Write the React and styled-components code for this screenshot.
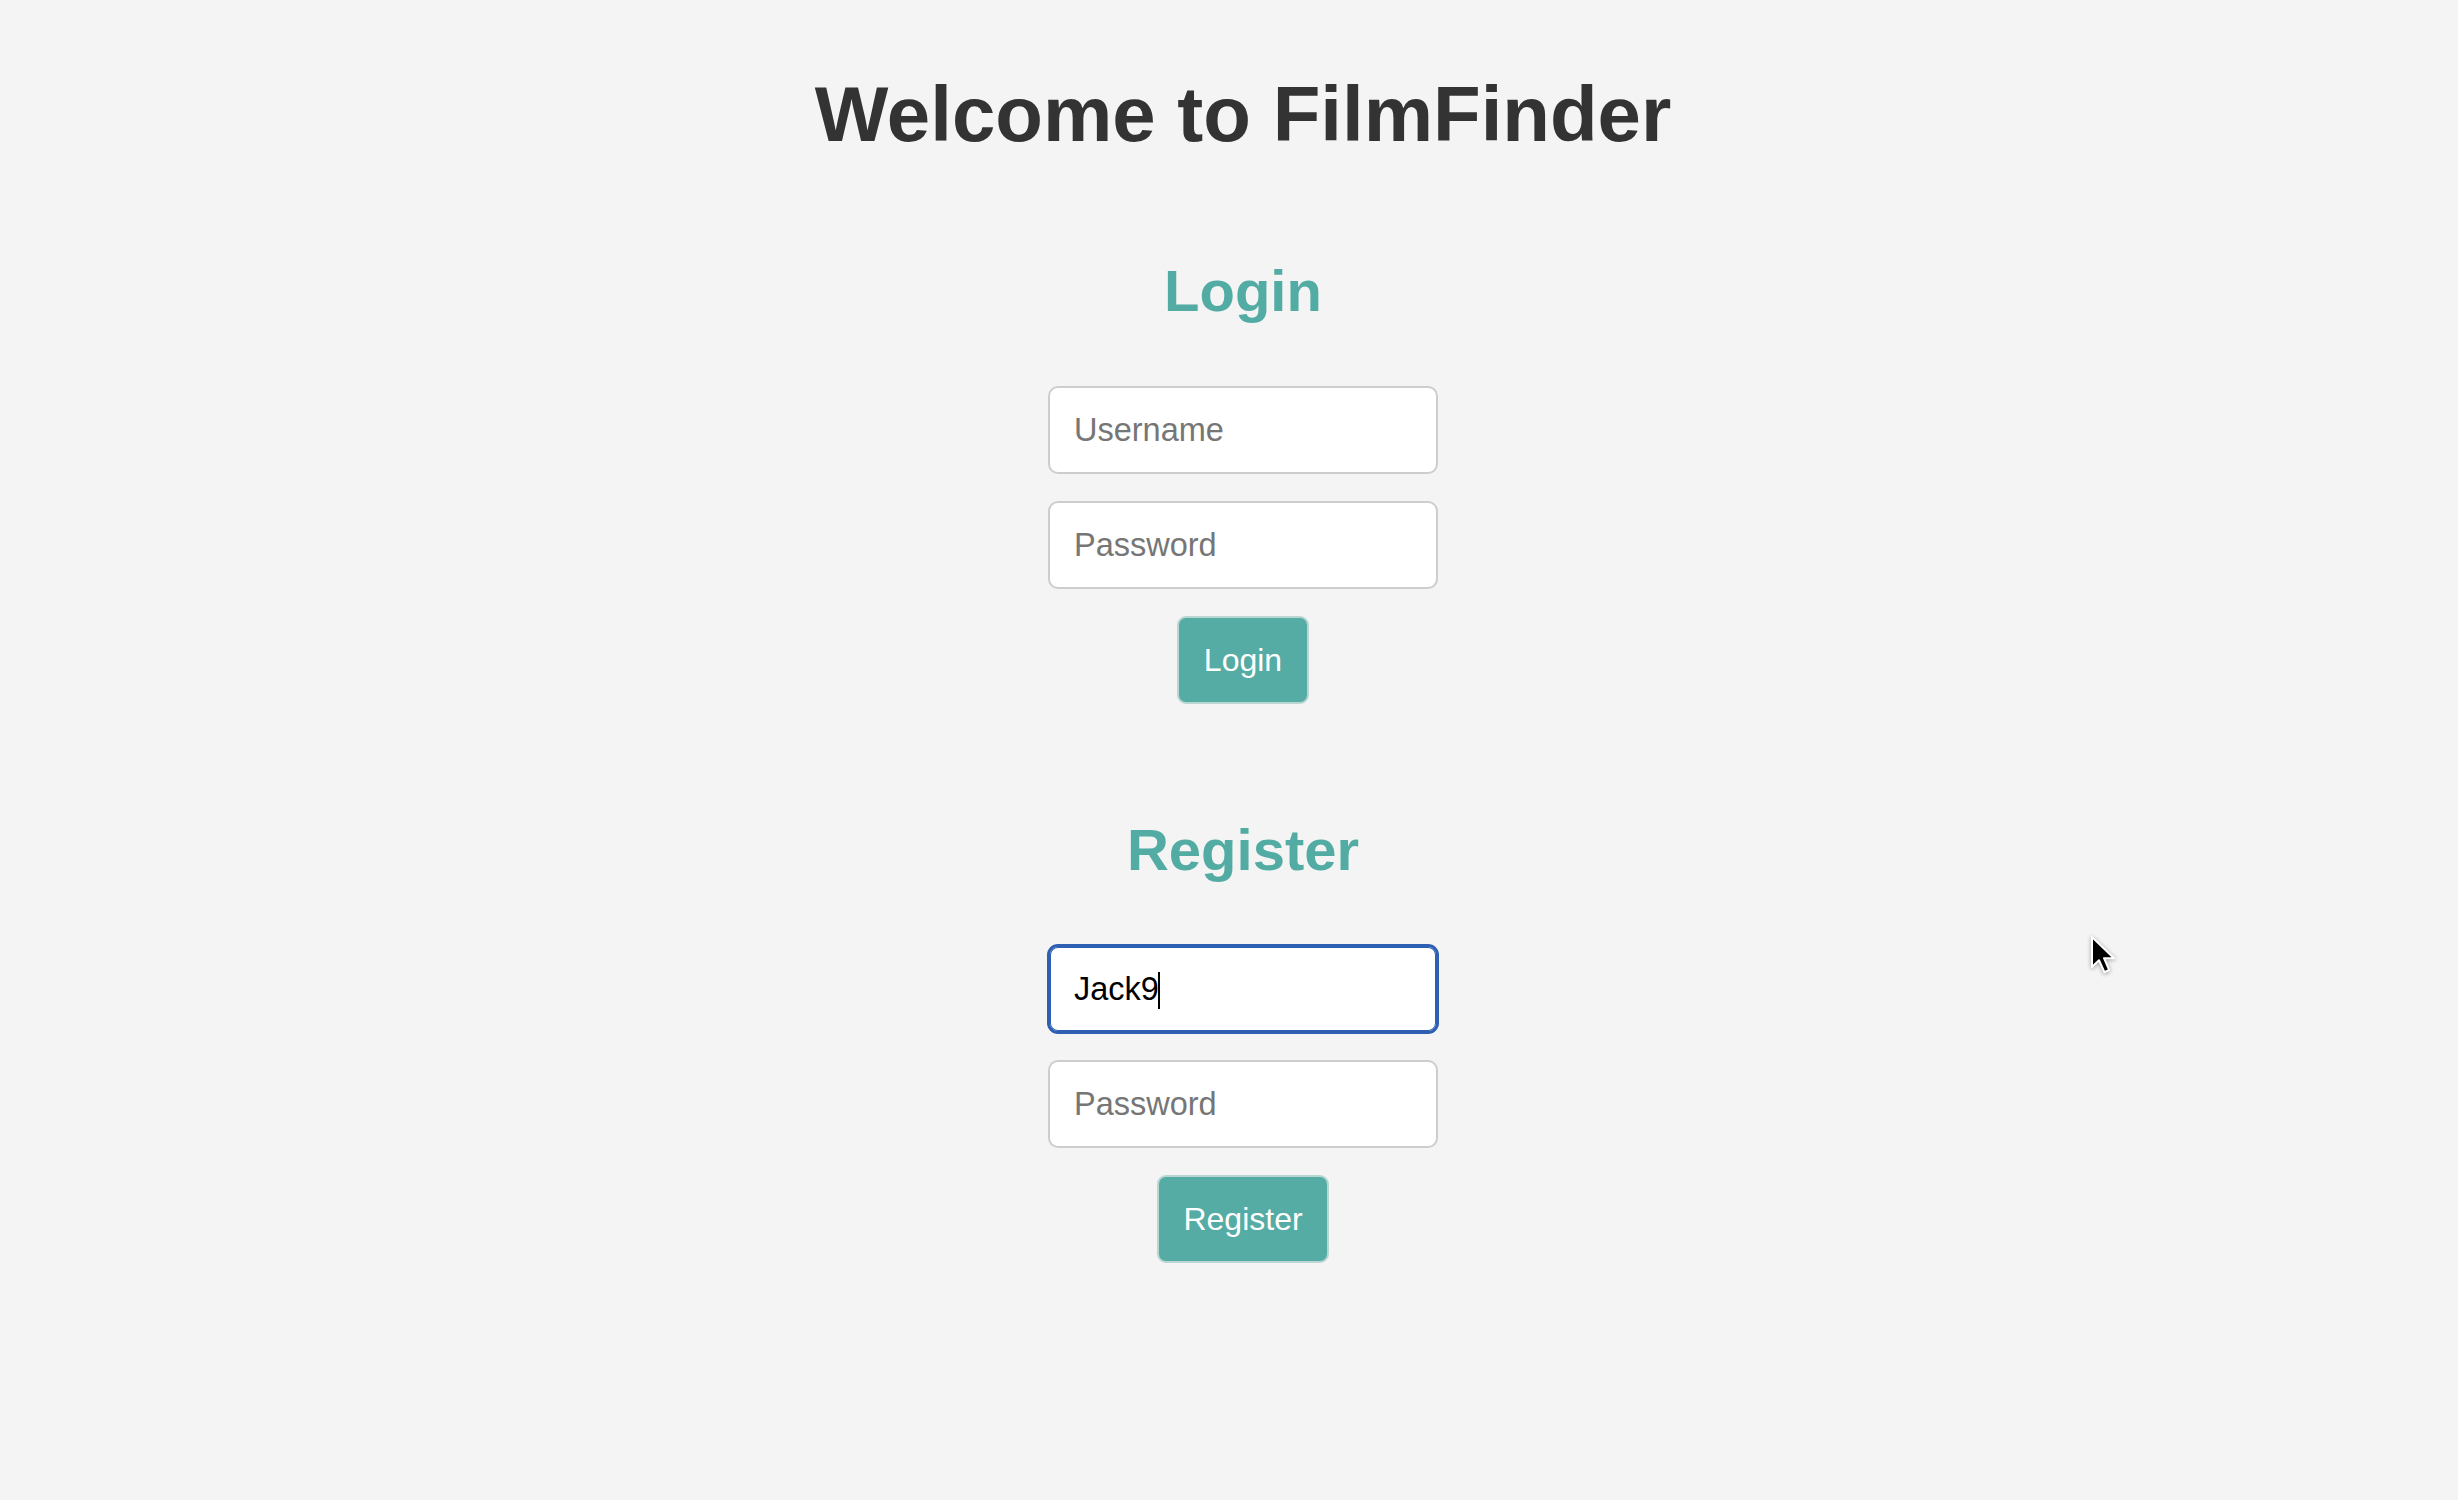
import styled, { createGlobalStyle } from "styled-components";

const GlobalStyle = createGlobalStyle`
    html, body {
        margin: 0;
        padding: 0;
        background: #f4f4f4;
    }
    body {
        font-family: "Liberation Sans", Arial, sans-serif;
    }
`

const Page = styled.div`
    position: relative;
    display: flex;
    flex-direction: column;
    align-items: center;
    min-height: 100vh;
    padding-top: 75px;
    padding-left: 28px;
    box-sizing: border-box;
`

const Title = styled.h1`
    margin: 0;
    font-size: 78px;
    line-height: 78px;
    font-weight: 700;
    color: #333333;
`

const Section = styled.section`
    display: flex;
    flex-direction: column;
    align-items: center;
    margin-top: ${(p) => p.$gap}px;
`

const Heading = styled.h2`
    margin: 0 0 66px;
    font-size: 58px;
    line-height: 58px;
    font-weight: 700;
    color: #52aca4;
`

const Form = styled.form`
    display: flex;
    flex-direction: column;
    align-items: center;
    gap: 27px;
`

const FieldWrap = styled.div`
    position: relative;
`

const Input = styled.input`
    display: block;
    box-sizing: border-box;
    width: 390px;
    height: 88px;
    padding: 0 24px;
    font-family: "Liberation Sans", Arial, sans-serif;
    font-size: 32.5px;
    color: #000;
    background: #fff;
    border: 2px solid ${(p) => (p.$focused ? "#2d5fb3" : "#cdcdcd")};
    border-radius: 10px;
    box-shadow: ${(p) =>
        p.$focused ? "0 0 0 1px #2d5fb3, inset 0 0 0 1px #2d5fb3" : "none"};
    outline: none;

    &::placeholder {
        color: #767676;
    }
`

const Caret = styled.span`
    position: absolute;
    left: 110px;
    top: 27px;
    width: 2px;
    height: 37px;
    background: #000;
`

const Button = styled.button`
    box-sizing: border-box;
    height: 88px;
    padding: 0 24.5px;
    font-family: "Liberation Sans", Arial, sans-serif;
    font-size: 32px;
    color: #fff;
    background: #54aca4;
    border: 2px solid #b9d6d3;
    border-radius: 9px;
    cursor: pointer;
`

const Pointer = styled.svg`
    position: absolute;
    left: 2090px;
    top: 935px;
    width: 28px;
    height: 40px;
    filter: drop-shadow(0 1px 2px rgba(0, 0, 0, 0.35));
`

const App = () => {
    return (
        <>
            <GlobalStyle />
            <Page>
                <Title>Welcome to FilmFinder</Title>

                <Section $gap={109}>
                    <Heading>Login</Heading>
                    <Form onSubmit={(e) => e.preventDefault()}>
                        <Input type="text" placeholder="Username" />
                        <Input type="password" placeholder="Password" />
                        <Button type="submit">Login</Button>
                    </Form>
                </Section>

                <Section $gap={117}>
                    <Heading>Register</Heading>
                    <Form onSubmit={(e) => e.preventDefault()}>
                        <FieldWrap>
                            <Input type="text" placeholder="Username" defaultValue="Jack9" $focused readOnly />
                            <Caret />
                        </FieldWrap>
                        <Input type="password" placeholder="Password" />
                        <Button type="submit">Register</Button>
                    </Form>
                </Section>

                <Pointer viewBox="0 0 14 20">
                    <path
                        d="M1 1 L1 16 L4.5 12.6 L7.2 18.6 L9.6 17.5 L7 11.6 L12 11.6 Z"
                        fill="#000"
                        stroke="#fff"
                        strokeWidth="1"
                        strokeLinejoin="round"
                    />
                </Pointer>
            </Page>
        </>
    );
};

export default App;
